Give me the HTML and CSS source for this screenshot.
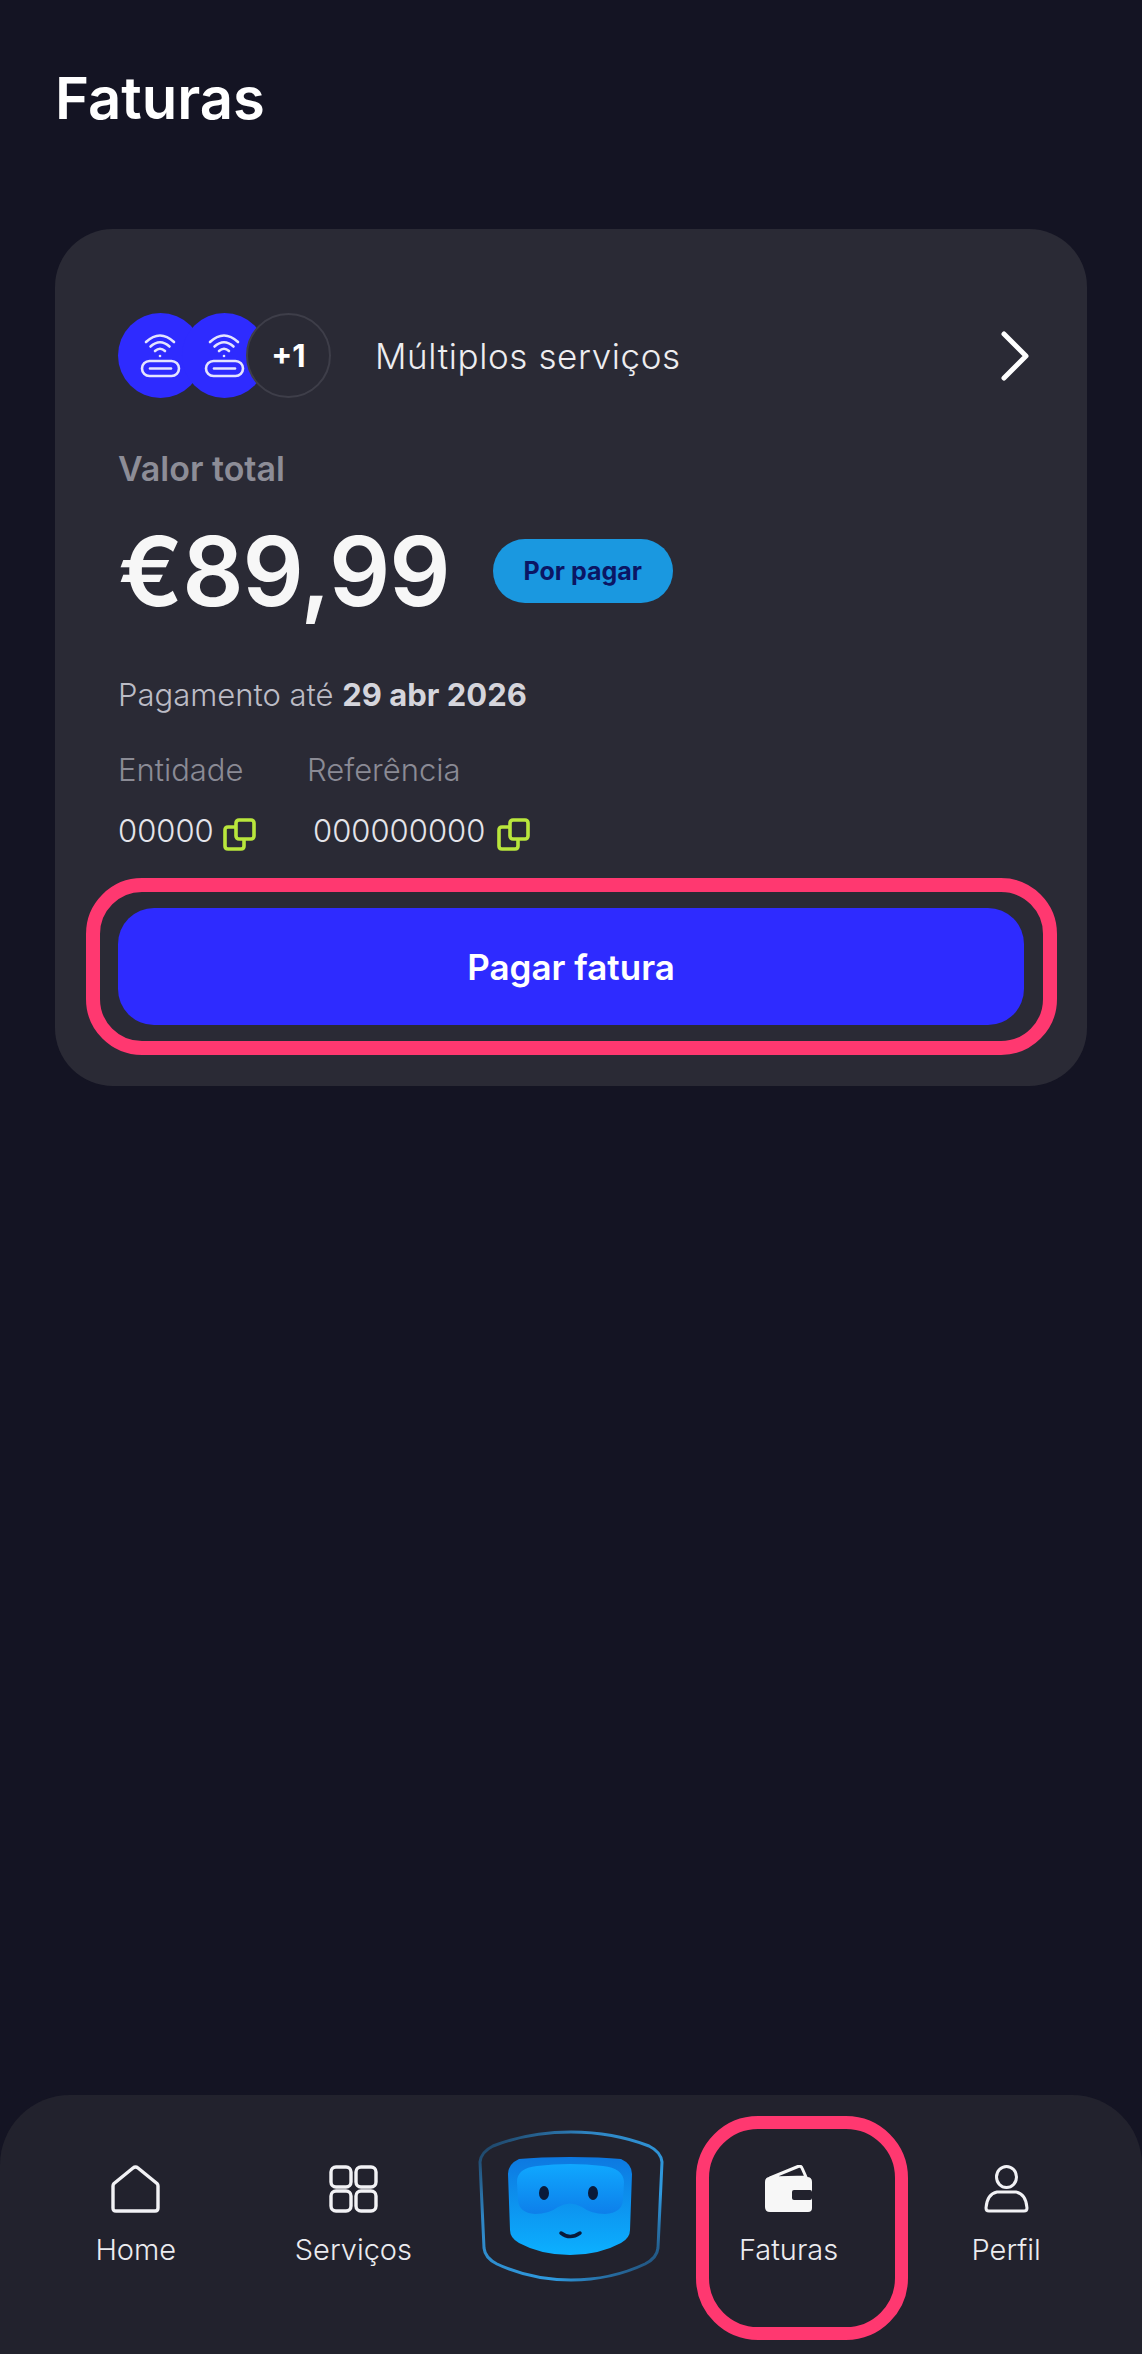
FILE: index.html
```html
<!DOCTYPE html>
<html lang="pt">
<head>
<meta charset="utf-8">
<title>Faturas</title>
<link rel="stylesheet" href="styles.css">
</head>
<body>
<div class="page">
  <main class="content">
    <h1 class="title">Faturas</h1>
    <section class="card">
      <div class="card-head">
        <div class="avatars">
          <span class="avatar">
            <svg class="router" viewBox="0 0 85 85" fill="none" stroke="#e4e4ff" stroke-width="2.6" stroke-linecap="round">
              <path d="M28 29Q42 16 56 29"/><path d="M32.500 33.500Q42 25 51.500 33.500"/><path d="M37 38Q42 33.500 47 38"/>
              <circle cx="42" cy="43" r="1.300" fill="#e4e4ff" stroke="none"/>
              <rect x="24" y="48" width="37" height="15" rx="7.500"/><path d="M32 55.500H53"/>
            </svg>
          </span>
          <span class="avatar avatar-next">
            <svg class="router" viewBox="0 0 85 85" fill="none" stroke="#e4e4ff" stroke-width="2.6" stroke-linecap="round">
              <path d="M28 29Q42 16 56 29"/><path d="M32.500 33.500Q42 25 51.500 33.500"/><path d="M37 38Q42 33.500 47 38"/>
              <circle cx="42" cy="43" r="1.300" fill="#e4e4ff" stroke="none"/>
              <rect x="24" y="48" width="37" height="15" rx="7.500"/><path d="M32 55.500H53"/>
            </svg>
          </span>
          <span class="avatar avatar-next avatar-more">+1</span>
        </div>
        <span class="service-name">Múltiplos serviços</span>
        <svg class="chevron" viewBox="0 0 30 50" fill="none" stroke="#fff" stroke-width="5" stroke-linecap="round" stroke-linejoin="round"><path d="M4 3L26 25L4 47"/></svg>
      </div>
      <div class="total-label">Valor total</div>
      <div class="amount-row">
        <span class="amount">€89,99</span>
        <span class="badge">Por pagar</span>
      </div>
      <p class="due">Pagamento até <strong>29 abr 2026</strong></p>
      <div class="pay-grid">
        <span class="pay-label">Entidade</span>
        <span class="pay-label">Referência</span>
        <span class="pay-value">00000
          <svg class="copy" viewBox="0 0 33 33" fill="none" stroke="#b9e63c" stroke-width="3.600" stroke-linejoin="round"><rect x="13" y="2" width="18" height="19" rx="3"/><path d="M13 9H5Q2 9 2 12V28Q2 31 5 31H18Q21 31 21 28V21"/></svg>
        </span>
        <span class="pay-value pay-value-ref">000000000
          <svg class="copy" viewBox="0 0 33 33" fill="none" stroke="#b9e63c" stroke-width="3.600" stroke-linejoin="round"><rect x="13" y="2" width="18" height="19" rx="3"/><path d="M13 9H5Q2 9 2 12V28Q2 31 5 31H18Q21 31 21 28V21"/></svg>
        </span>
      </div>
      <button class="pay-button" type="button">Pagar fatura</button>
    </section>
  </main>
  <nav class="nav">
    <a class="nav-item">
      <svg class="nav-icon" viewBox="0 0 49 48" fill="none" stroke="#f2f2f5" stroke-width="3.400" stroke-linejoin="round"><path d="M3 18.500L22 3Q24.500 1 27 3L46 18.500Q47 19.500 47 21V43Q47 46 44 46H5Q2 46 2 43V21Q2 19.500 3 18.500Z"/></svg>
      <span class="nav-label">Home</span>
    </a>
    <a class="nav-item">
      <svg class="nav-icon" viewBox="0 0 49 48" fill="none" stroke="#f2f2f5" stroke-width="3.400"><rect x="2" y="2" width="20" height="20" rx="5"/><rect x="27" y="2" width="20" height="20" rx="5"/><rect x="2" y="26" width="20" height="20" rx="5"/><rect x="27" y="26" width="20" height="20" rx="5"/></svg>
      <span class="nav-label">Serviços</span>
    </a>
    <a class="nav-item nav-mascot">
      <svg class="mascot" viewBox="0 0 188 152" fill="none">
        <defs>
          <linearGradient id="ring" x1="0" y1="0" x2="1" y2="1">
            <stop offset="0" stop-color="#1b3550"/><stop offset=".3" stop-color="#2f86c4"/><stop offset=".7" stop-color="#2f9adf"/><stop offset="1" stop-color="#1d3a5c"/>
          </linearGradient>
          <linearGradient id="face" x1="0" y1="0" x2="0" y2="1">
            <stop offset="0" stop-color="#0d78e0"/><stop offset="1" stop-color="#0cb0ff"/>
          </linearGradient>
          <linearGradient id="visor" x1="0" y1="0" x2="0" y2="1">
            <stop offset="0" stop-color="#10a8ff"/><stop offset="1" stop-color="#0d7fea"/>
          </linearGradient>
        </defs>
        <path d="M3 32Q4 22 16 16Q52 2 94 2Q136 2 172 16Q184 22 185 32L181 118Q180 128 168 134Q134 150 94 150Q54 150 20 134Q8 128 7 118Z" stroke="url(#ring)" stroke-width="3"/>
        <path d="M31 44Q31 34 42 29Q62 27 93 27Q124 27 144 29Q155 34 155 44L153 100Q153 108 144 113Q122 125 93 125Q64 125 42 113Q33 108 33 100Z" fill="url(#face)"/>
        <path d="M40 52Q40 38 60 36Q93 32 126 36Q146 38 147 52L146 70Q145 83 128 84Q114 84 105 77Q93 70 81 77Q72 84 58 84Q42 83 41 70Z" fill="url(#visor)"/>
        <ellipse cx="67" cy="63" rx="5" ry="7" fill="#0a1a3a"/>
        <ellipse cx="116" cy="63" rx="5" ry="7" fill="#0a1a3a"/>
        <path d="M84 103Q93 110 103 103" stroke="#0a1a3a" stroke-width="3.500" stroke-linecap="round"/>
      </svg>
    </a>
    <a class="nav-item nav-active">
      <svg class="nav-icon" viewBox="0 0 49 48" fill="none"><path d="M6 13L34 1.500Q37 .5 38 3L42 12Z" fill="none" stroke="#f7f7f7" stroke-width="3" stroke-linejoin="round"/><path d="M1 17Q1 12 6 12H43Q48 12 48 17V43Q48 47 44 47H6Q1 47 1 42Z" fill="#f7f7f7"/><rect x="28" y="25" width="20" height="10" rx="2" fill="#22222d"/></svg>
      <span class="nav-label">Faturas</span>
    </a>
    <a class="nav-item">
      <svg class="nav-icon" viewBox="0 0 49 48" fill="none" stroke="#f2f2f5" stroke-width="3"><ellipse cx="24.500" cy="12" rx="10" ry="10.500"/><path d="M15 27H34Q44 29 45 43Q45 46 42 46H7Q4 46 4 43Q5 29 15 27Z" stroke-linejoin="round"/></svg>
      <span class="nav-label">Perfil</span>
    </a>
  </nav>
</div>
</body>
</html>
```
FILE: styles.css
```css
* { box-sizing: border-box; }
html, body { margin: 0; padding: 0; }
body {
  background: #141423;
  color: #fff;
  font-family: Inter, "Open Sans", "Liberation Sans", sans-serif;
}
.page {
  width: 1142px;
  height: 2354px;
  display: flex;
  flex-direction: column;
  overflow: hidden;
}
.content { flex: 1; padding: 60px 55px 0; }
.title {
  margin: 0 0 93px;
  font-size: 58px;
  line-height: 76px;
  font-weight: 600;
  letter-spacing: 0;
}
.card {
  height: 857px;
  padding: 84px 63px 0;
  border-radius: 58px;
  background: #2a2a35;
}
.card-head { display: flex; align-items: center; height: 85px; }
.avatars { display: flex; }
.avatar {
  width: 85px;
  height: 85px;
  border-radius: 50%;
  background: #2e2bff;
  display: flex;
  align-items: center;
  justify-content: center;
  flex: none;
}
.avatar-next { margin-left: -21px; }
.avatar-more {
  position: relative;
  background: #2a2a35;
  border: 2px solid #3e3e49;
  font-size: 31px;
  font-weight: 700;
}
.router { width: 85px; height: 85px; }
.service-name {
  margin-left: 44px;
  font-size: 35px;
  font-weight: 300;
  color: #ededf0;
  letter-spacing: .6px;
}
.chevron { width: 30px; height: 50px; margin-left: auto; margin-right: -6px; flex: none; }
.total-label {
  margin-top: 49px;
  font-size: 34px;
  line-height: 44px;
  font-weight: 600;
  color: #8d8d97;
}
.amount-row { display: flex; align-items: center; margin-top: 32px; height: 96px; }
.amount { font-size: 96px; line-height: 96px; font-weight: 600; color: #f7f7f7; letter-spacing: -1px; }
.badge {
  margin-left: 43px;
  width: 180px;
  height: 64px;
  border-radius: 32px;
  background: #1a98e0;
  color: #0b1664;
  display: flex;
  align-items: center;
  justify-content: center;
  font-size: 25px;
  font-weight: 700;
}
.due {
  margin: 54px 0 0;
  font-size: 31px;
  line-height: 44px;
  font-weight: 300;
  color: #bcbcc6;
}
.due strong { font-weight: 700; color: #d5d5dc; }
.pay-grid {
  margin-top: 33px;
  display: grid;
  grid-template-columns: 189px 1fr;
  grid-template-rows: 40px 40px;
  row-gap: 21px;
}
.pay-label { font-size: 31px; line-height: 40px; font-weight: 300; color: #8b8b95; }
.pay-value {
  display: flex;
  align-items: center;
  gap: 9px;
  font-size: 31px;
  line-height: 40px;
  font-weight: 300;
  color: #e4e4ea;
  white-space: nowrap;
}
.pay-value-ref { margin-left: 6px; gap: 12px; }
.copy { width: 33px; height: 33px; margin-top: 6px; flex: none; }
.pay-button {
  position: relative;
  display: block;
  width: 100%;
  height: 117px;
  margin-top: 57px;
  border: 0;
  border-radius: 36px;
  background: #2e2bff;
  color: #fff;
  font-family: inherit;
  font-size: 35px;
  font-weight: 600;
}
.pay-button::after {
  content: "";
  position: absolute;
  inset: -30px -33px -30px -32px;
  border: 14px solid #ff3870;
  border-radius: 56px;
}
.nav {
  height: 259px;
  padding: 70px 27px 0;
  flex: none;
  display: grid;
  grid-template-columns: repeat(5, 1fr);
  align-items: start;
  border-radius: 70px 70px 0 0;
  background: #22222d;
}
.nav-item {
  position: relative;
  display: flex;
  flex-direction: column;
  align-items: center;
}
.nav-icon { width: 49px; height: 48px; display: block; }
.nav-label {
  margin-top: 15px;
  font-size: 29px;
  line-height: 44px;
  font-weight: 300;
  color: #ececf0;
}
.nav-mascot { margin-top: -35px; }
.mascot { width: 188px; height: 152px; display: block; }
.nav-active::after {
  content: "";
  position: absolute;
  top: -49px;
  bottom: -68px;
  left: 16px;
  right: 16px;
  width: 186px;
  border: 13px solid #ff3870;
  border-radius: 62px;
}
```
